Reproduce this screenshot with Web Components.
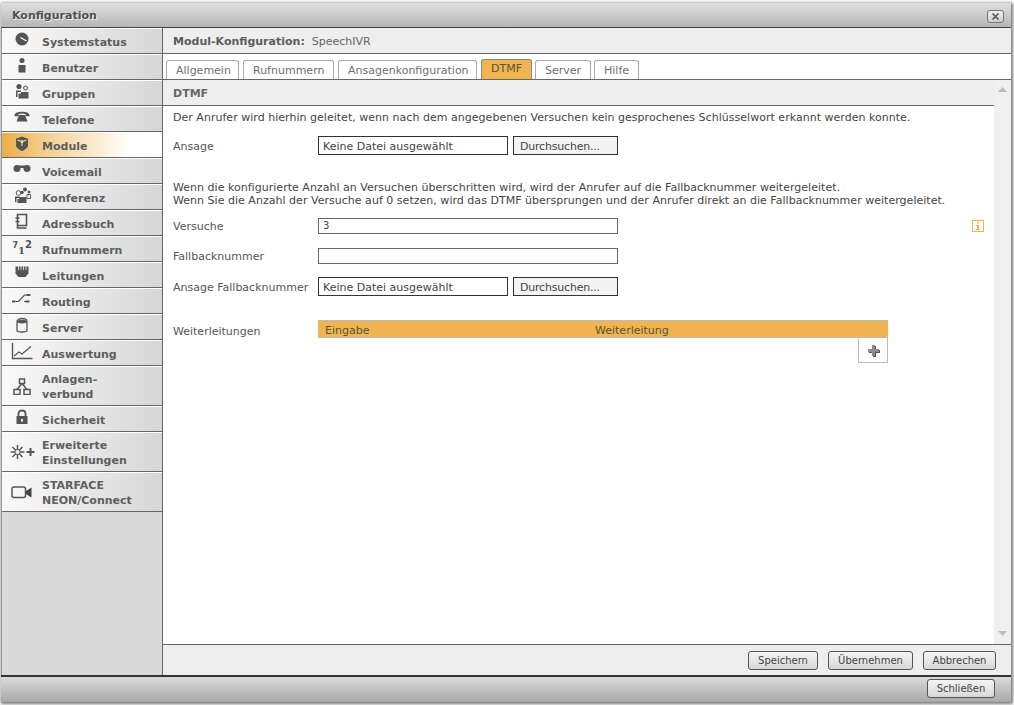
<!DOCTYPE html>
<html><head><meta charset="utf-8">
<style>
html,body{margin:0;height:100%;background:#fff}
body{font:11px "DejaVu Sans",Verdana,sans-serif;color:#444;overflow:hidden}
</style></head><body>
<sf-window>
  <span slot="title">Konfiguration</span>
  <sf-nav slot="nav">
    <sf-item icon="clock">Systemstatus</sf-item>
    <sf-item icon="user">Benutzer</sf-item>
    <sf-item icon="group">Gruppen</sf-item>
    <sf-item icon="phone">Telefone</sf-item>
    <sf-item icon="cube" active>Module</sf-item>
    <sf-item icon="voicemail">Voicemail</sf-item>
    <sf-item icon="conf">Konferenz</sf-item>
    <sf-item icon="book">Adressbuch</sf-item>
    <sf-item icon="nums">Rufnummern</sf-item>
    <sf-item icon="plug">Leitungen</sf-item>
    <sf-item icon="route">Routing</sf-item>
    <sf-item icon="server">Server</sf-item>
    <sf-item icon="chart">Auswertung</sf-item>
    <sf-item icon="net" tall>Anlagen-<br>verbund</sf-item>
    <sf-item icon="lock">Sicherheit</sf-item>
    <sf-item icon="gear" tall>Erweiterte<br>Einstellungen</sf-item>
    <sf-item icon="cam" tall>STARFACE<br>NEON/Connect</sf-item>
  </sf-nav>
  <sf-module slot="main">
    <b slot="head">Modul-Konfiguration:</b><span slot="head">SpeechIVR</span>
    <sf-tab slot="tabs" w="73">Allgemein</sf-tab>
    <sf-tab slot="tabs" w="91">Rufnummern</sf-tab>
    <sf-tab slot="tabs" w="139">Ansagenkonfiguration</sf-tab>
    <sf-tab slot="tabs" w="51" active>DTMF</sf-tab>
    <sf-tab slot="tabs" w="56" style="margin-left:-1px">Server</sf-tab>
    <sf-tab slot="tabs" w="45" style="margin-left:-1px">Hilfe</sf-tab>
    <span slot="section">DTMF</span>
    <sf-form slot="content"></sf-form>
    <sf-btn slot="actions" w="70">Speichern</sf-btn>
    <sf-btn slot="actions" w="85">Übernehmen</sf-btn>
    <sf-btn slot="actions" w="73">Abbrechen</sf-btn>
  </sf-module>
  <sf-btn slot="close" w="68">Schließen</sf-btn>
</sf-window>
<script>
function def(name,html,init){
  customElements.define(name,class extends HTMLElement{
    constructor(){super();this.attachShadow({mode:'open'}).innerHTML=html;}
    connectedCallback(){if(init)init.call(this,this.shadowRoot);}
  });
}
def('sf-window',`<style>
:host{display:flex;flex-direction:column;position:fixed;inset:3px 3px 3px 1px;box-shadow:1px 1px 3px 1px #777;background:#ddd}
.t{height:25px;flex:none;box-sizing:border-box;border-bottom:1px solid #444;background:linear-gradient(#dedede,#b6b6b6);display:flex;align-items:center;padding:1px 7px 0 11px;font-weight:bold;color:#505050;text-shadow:1px 1px 0 #eee;justify-content:space-between}
.x{width:17px;height:13px;box-sizing:border-box;border:1px solid #777;border-radius:3px;margin-top:1px;background:linear-gradient(#eee,#ccc);display:flex}
.b{flex:1;display:flex;min-height:0}
.c{height:27px;flex:none;box-sizing:border-box;border-top:2px solid #333;background:linear-gradient(#dadada,#a8a8a8);display:flex;align-items:center;justify-content:flex-end;padding:0 16px 2px 0}
</style>
<div class="t"><slot name="title"></slot><span class="x"><svg width="15" height="11" viewBox="0 0 15 11"><path d="M4.500 2.500l6 6M10.500 2.500l-6 6" stroke="#555" stroke-width="1.600" fill="none"/></svg></span></div>
<div class="b"><slot name="nav"></slot><slot name="main"></slot></div>
<div class="c"><slot name="close"></slot></div>`);
def('sf-nav',`<style>
:host{display:flex;flex-direction:column;width:162px;flex:none;box-sizing:border-box;border-left:1px solid #999;border-right:1px solid #666;background:#d9d9d9}
</style><slot></slot>`);
const I={
clock:'<circle cx="10" cy="8" r="6.500" fill="#555"/><path d="M8.500 6.500l6 3.500" stroke="#fff" stroke-width="1.200"/>',
user:'<circle cx="10" cy="3.500" r="2.500" fill="#555"/><path d="M6.500 8h7v7.500h-7z" fill="#555"/>',
group:'<circle cx="7" cy="3.500" r="2.600" fill="#555"/><circle cx="13.500" cy="5" r="2" fill="none" stroke="#555"/><path d="M4 7.500h5v1.500H5.500v5H4z" fill="#555"/><path d="M9 9h7.500v6.500H6.500V10.500H9z" fill="#555"/>',
phone:'<path d="M2.500 6C2.500 1.500 17.500 1.500 17.500 6v1.200h-4V5.200c-2-.8-5-.8-7 0v2h-4z" fill="#555"/><path d="M7 6h6l2.500 6.500h-11z" fill="#555"/>',
cube:'<path d="M10 1.500l6 2.200v6.500c0 2.500-3 4.500-6 5.800-3-1.300-6-3.300-6-5.800V3.700z" fill="#555"/><path d="M5.500 5l4.500 1.800 4.500-1.800M10 7v4" stroke="#f3d08f" stroke-width="1.200" fill="none"/><circle cx="10" cy="6.500" r="1.500" fill="#f3d08f"/>',
voicemail:'<circle cx="5" cy="7.500" r="3.500" fill="#555"/><circle cx="15" cy="7.500" r="3.500" fill="#555"/><path d="M5 4.500h10V7H5z" fill="#555"/>',
conf:'<circle cx="6.500" cy="6" r="2.300" fill="none" stroke="#555"/><circle cx="13" cy="2.500" r="2" fill="#555"/><circle cx="17" cy="5" r="1.500" fill="#555"/><circle cx="10" cy="5.500" r="1.800" fill="#555"/><path d="M3 9.500h4.500V11H4.500v4H3z" fill="#555"/><path d="M7 10h7.500v6H5.500v-4H7z" fill="#555"/><path d="M15 7.500h3.500v4H15z" fill="none" stroke="#555"/>',
book:'<path d="M5.500 1.500h9v11h-9zM5.500 12.500V15h9" fill="none" stroke="#555" stroke-width="1.600"/><path d="M3.500 5h4M3.500 8.500h4" stroke="#555" stroke-width="1.600"/>',
nums:'<text x="0.500" y="9" font-family="DejaVu Sans" font-size="8" font-weight="bold" fill="#555">7</text><text x="6" y="15" font-family="DejaVu Serif" font-size="10" font-weight="bold" fill="#555">1</text><text x="13" y="9" font-family="DejaVu Sans" font-size="10" font-weight="bold" fill="#555">2</text>',
plug:'<path d="M3.500 1.500h13v7l-3 3.500h-7l-3-3.500z" fill="#555"/><path d="M6.500 1v4M9 1v4M11.500 1v4M14 1v4" stroke="#e2e2e2" stroke-width=".9"/>',
route:'<path d="M3 10.500h3.500l6-6.500H16M12 10.500h5" stroke="#555" stroke-width="1.200" fill="none"/><path d="M0 9.500h3v2H0zM14.500 3h4v2h-4zM13.500 9.500h4v2h-4z" fill="#555"/>',
server:'<path d="M5 4.500c0-4 10-4 10 0v9c0 2-10 2-10 0z" fill="none" stroke="#555" stroke-width="1.300"/><path d="M5 4.500c0 2.500 10 2.500 10 0s-10-2.500-10 0" fill="#555"/>',
chart:'<path d="M1.500 0v15.500h20" fill="none" stroke="#555" stroke-width="1.400"/><path d="M3 13l5-4 3 2 9-7.500" fill="none" stroke="#555" stroke-width="1.200"/>',
net:'<path d="M7.500 1h5v4.500h-5zM2 11.500h6v5H2zM12 11.500h6v5h-6z" fill="none" stroke="#555" stroke-width="1.500"/><path d="M10 5.500L5 11.500M10 5.500l5 6" stroke="#555" stroke-width="1.500"/>',
lock:'<path d="M6.500 7V4.500c0-4 7-4 7 0V7" fill="none" stroke="#555" stroke-width="1.800"/><path d="M4.500 7h11v8h-11z" fill="#555"/><path d="M9 10h2v2.500H9z" fill="#fff"/>',
gear:'<path d="M8.500 1v14M1.500 8h14M3.500 3l10 10M13.500 3l-10 10" stroke="#555" stroke-width="1.500"/><circle cx="8.500" cy="8" r="2.600" fill="#eee" stroke="#555"/><path d="M21.500 4v8M17.500 8h8" stroke="#555" stroke-width="2"/>',
cam:'<rect x="1" y="3" width="13.500" height="10.500" rx="2" fill="none" stroke="#555" stroke-width="1.500"/><path d="M15 7l5.500-3.500v10L15 10z" fill="#444"/>'
};
customElements.define('sf-item',class extends HTMLElement{
  constructor(){super();this.attachShadow({mode:'open'});}
  connectedCallback(){
    const k=this.getAttribute('icon'),a=this.hasAttribute('active'),t=this.hasAttribute('tall');
    const w=k==='gear'?26:['chart','cam'].includes(k)?22:20;
    this.shadowRoot.innerHTML=`<style>
:host{display:flex;align-items:center;box-sizing:border-box;height:${t?40:26}px;flex:none;border-bottom:1px solid #666;border-top:1px solid #fff;
background:${a?'linear-gradient(90deg,#eaae48,#f3cd8c 25%,#fff 80%)':'linear-gradient(90deg,#fafafa,#d6d6d6)'};
font-weight:bold;color:#5e5e5e;line-height:15px}
.i{width:40px;flex:none;display:flex;justify-content:center;margin-top:${t?0:-3}px}
.t{padding-top:2px}
svg{display:block;flex:none}
</style><div class="i"><svg width="${w}" height="17" viewBox="0 0 ${w} 17">${I[k]}</svg></div><div class="t"><slot></slot></div>`;
  }
});
def('sf-module',`<style>
:host{flex:1;display:flex;flex-direction:column;min-width:0;background:#fff}
.h{height:26px;flex:none;box-sizing:border-box;background:#eee;border-bottom:1px solid #666;display:flex;align-items:center;gap:7px;padding:1px 10px 0;color:#666}
.h ::slotted(b){color:#5c5c5c}
.tabs{height:26px;flex:none;box-sizing:border-box;border-bottom:1px solid #666;display:flex;align-items:flex-end;gap:4px;padding:0 0 0 3px;background:#fff}
.s{height:26px;flex:none;box-sizing:border-box;background:#eee;display:flex;align-items:center;padding:1px 10px 0;font-weight:bold;color:#666;border-bottom:1px solid #666}
.m{flex:1;display:flex;min-height:0;background:#f0f0f0}
.sec{flex:1;display:flex;flex-direction:column;min-width:0}
.c{flex:1;background:#fff}
.bar{width:17px;flex:none;display:flex;flex-direction:column;align-items:center;justify-content:space-between;padding:7px 0 8px;box-sizing:border-box}
.f{height:31px;flex:none;box-sizing:border-box;background:#eee;border-top:1px solid #666;display:flex;align-items:center;justify-content:flex-end;gap:10px;padding:0 15px 0 0}
</style>
<div class="h"><slot name="head"></slot></div>
<div class="tabs"><slot name="tabs"></slot></div>
<div class="m"><div class="sec"><div class="s"><slot name="section"></slot></div><div class="c"><slot name="content"></slot></div></div>
<div class="bar"><svg width="9" height="5"><path d="M0 5L4.500 0L9 5z" fill="#bbb"/></svg><svg width="9" height="5"><path d="M0 0L4.500 5L9 0z" fill="#bbb"/></svg></div></div>
<div class="f"><slot name="actions"></slot></div>`);
customElements.define('sf-tab',class extends HTMLElement{
  constructor(){super();this.attachShadow({mode:'open'});}
  connectedCallback(){
    const a=this.hasAttribute('active'),w=this.getAttribute('w');
    this.shadowRoot.innerHTML=`<style>
:host{display:block;box-sizing:border-box;width:${w}px;height:${a?20:19}px;padding-left:9px;white-space:nowrap;line-height:${a?17:19}px;border:1px solid ${a?'#888':'#aaa'};border-bottom:0;border-radius:3px 3px 0 0;background:${a?'#f0b552':'#fff'};color:${a?'#553':'#707070'}}
</style><slot></slot>`;
  }
});
customElements.define('sf-btn',class extends HTMLElement{
  constructor(){super();this.attachShadow({mode:'open'});}
  connectedCallback(){
    const w=this.getAttribute('w');
    this.shadowRoot.innerHTML=`<style>
:host{display:block;box-sizing:border-box;width:${w}px;height:19px;line-height:17px;font-size:10px;text-align:center;border:1px solid #555;border-radius:3px;background:linear-gradient(#f4f4f4,#d8d8d8);color:#444}
</style><slot></slot>`;
  }
});
def('sf-file',`<style>
:host{display:flex;gap:5px;width:300px}
div{box-sizing:border-box;height:19px;border:1px solid #333;line-height:19px;color:#444}
.n{width:190px;padding-left:4px;background:#fff}
.b{width:105px;padding-left:6px;background:#f4f4f4;letter-spacing:-.2px}
</style><div class="n">Keine Datei ausgewählt</div><div class="b">Durchsuchen...</div>`);
def('sf-input',`<style>
:host{display:block;box-sizing:border-box;width:300px;height:16px;border:1px solid #666;padding-left:4px;line-height:14px;font-size:10px;color:#444;background:#fff}
</style><slot></slot>`);
def('sf-row',`<style>
:host{display:flex;align-items:center;min-height:19px}
.l{width:145px;height:19px;flex:none;color:#555;line-height:19px;padding-top:var(--label-top,1px);box-sizing:border-box;align-self:flex-start}
.e{display:flex;flex:1;align-items:center;justify-content:space-between}
</style><div class="l"><slot name="label"></slot></div><div class="e"><slot></slot></div>`);
def('sf-table',`<style>
:host{display:block;width:570px}
.h{height:18px;box-sizing:border-box;background:#f0b552;border-top:1px solid #bbb;border-bottom:1px solid #bbb;display:grid;grid-template-columns:270px 1fr;line-height:19px;padding-left:7px;color:#553}
.p{margin-left:540px;width:30px;height:25px;box-sizing:border-box;border:1px solid #bbb;border-top:0;display:flex;align-items:center;justify-content:center;background:#fff}
</style><div class="h"><span>Eingabe</span><span>Weiterleitung</span></div>
<div class="p"><svg width="13" height="13" viewBox="0 0 13 13"><path d="M5 1h3v4h4v3H8v4H5V8H1V5h4z" fill="#555" transform="translate(1 1)"/><path d="M5 1h3v4h4v3H8v4H5V8H1V5h4z" fill="#8c8c8c"/></svg></div>`);
def('sf-form',`<style>
:host{display:block;padding:5px 10px 0;color:#444}
p{margin:0;line-height:13px;letter-spacing:.025px}
.a{margin-bottom:12px}
.b{margin:26px 0 9px}
.f{margin-top:11px}
.g{margin-top:12px}
.w{margin-top:24px;--label-top:2px}
.i{width:12px;height:12px;box-sizing:border-box;border:1px solid #f0b552;display:flex;justify-content:center}
svg{display:block}
</style>
<p class="a">Der Anrufer wird hierhin geleitet, wenn nach dem angegebenen Versuchen kein gesprochenes Schlüsselwort erkannt werden konnte.</p>
<sf-row><span slot="label">Ansage</span><sf-file></sf-file></sf-row>
<p class="b">Wenn die konfigurierte Anzahl an Versuchen überschritten wird, wird der Anrufer auf die Fallbacknummer weitergeleitet.<br>Wenn Sie die Anzahl der Versuche auf 0 setzen, wird das DTMF übersprungen und der Anrufer direkt an die Fallbacknummer weitergeleitet.</p>
<sf-row class="v"><span slot="label">Versuche</span><sf-input>3</sf-input><span class="i"><svg width="10" height="10" viewBox="0 0 10 10"><path d="M4 1h2v1.500H4zM3 4h3v4h1v1H3V8h1V5H3z" fill="#f0b552"/></svg></span></sf-row>
<sf-row class="f"><span slot="label">Fallbacknummer</span><sf-input></sf-input></sf-row>
<sf-row class="g"><span slot="label">Ansage Fallbacknummer</span><sf-file></sf-file></sf-row>
<sf-row class="w"><span slot="label">Weiterleitungen</span><sf-table></sf-table></sf-row>`);
</script>
</body></html>
